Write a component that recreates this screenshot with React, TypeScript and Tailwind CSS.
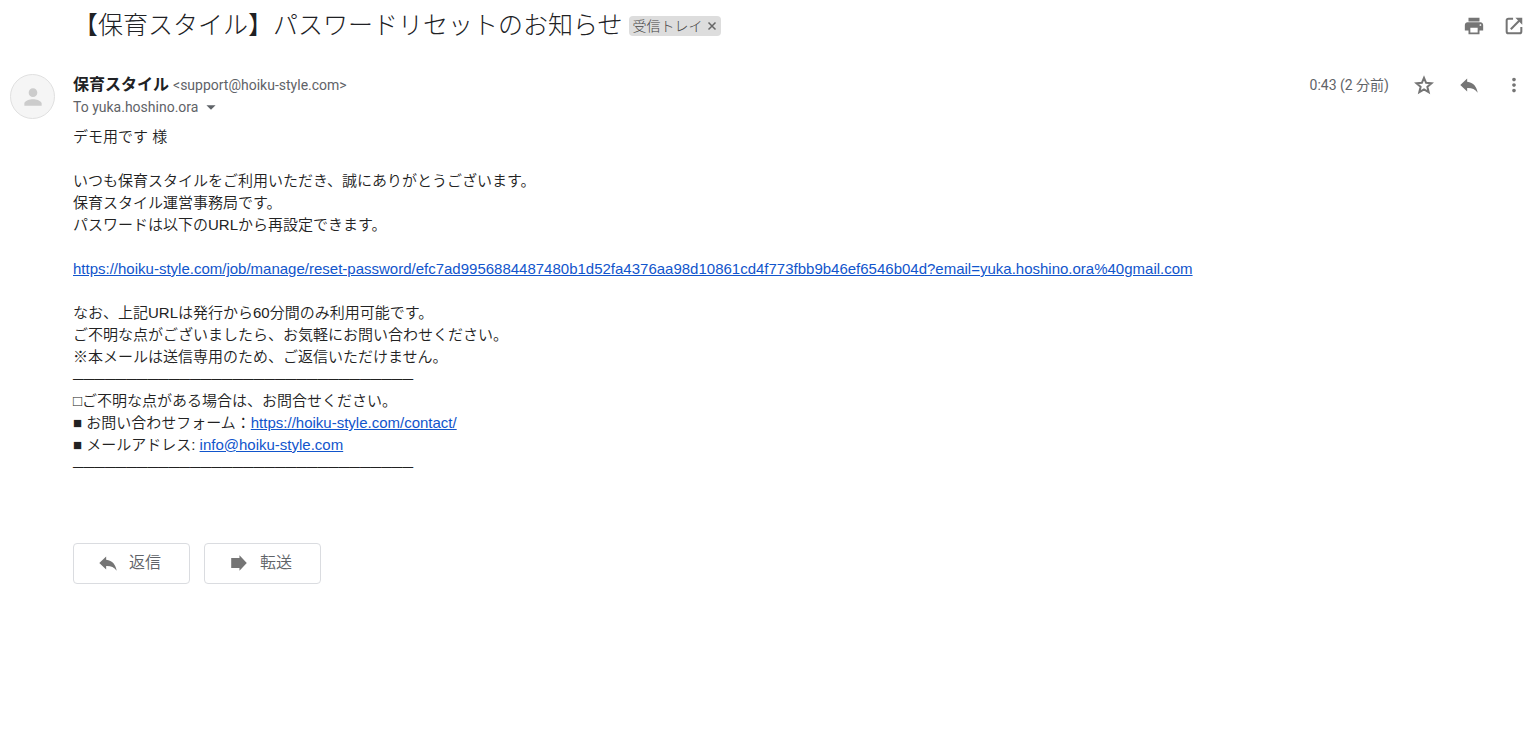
import type { ReactNode } from 'react';
import { MdArrowDropDown, MdMoreVert, MdPerson, MdPrint } from 'react-icons/md';

const RULE = '─'.repeat(32);
const RESET_URL =
  'https://hoiku-style.com/job/manage/reset-password/efc7ad9956884487480b1d52fa4376aa98d10861cd4f773fbb9b46ef6546b04d?email=yuka.hoshino.ora%40gmail.com';

function OpenInNewIcon() {
  return (
    <svg viewBox="0 0 24 24" className="size-[22px]" fill="none" stroke="currentColor" strokeWidth="2.2">
      <path d="M11 4H6a2 2 0 0 0-2 2v12a2 2 0 0 0 2 2h12a2 2 0 0 0 2-2v-5" />
      <path d="M8.5 15.5 19 5" />
      <path d="M13.500 3H21v7.500z" fill="currentColor" stroke="none" />
    </svg>
  );
}

function StarIcon() {
  return (
    <svg viewBox="0 0 24 24" className="size-[22px]" fill="none" stroke="currentColor" strokeWidth="2.2">
      <path d="M12 4.200l2.300 5.400 5.900.5-4.500 3.900 1.400 5.800L12 16.700l-5.100 3.100 1.400-5.800-4.500-3.900 5.900-.5z" />
    </svg>
  );
}

function ReplyIcon() {
  return (
    <svg viewBox="0 0 24 24" className="size-[22px]" fill="currentColor">
      <path d="M10 8.500V5l-7.500 7 7.500 7v-3.700c5-.2 8.500 1.200 11.500 5.200-1-6-4.500-11.500-11.500-12z" />
    </svg>
  );
}

function ForwardIcon() {
  return (
    <svg viewBox="0 0 24 24" className="size-[22px]" fill="currentColor">
      <path d="M3.500 6.5h9V3.500L20.500 12l-8 8.500v-3h-9z" />
    </svg>
  );
}

function IconButton({ label, children }: { label: string; children: ReactNode }) {
  return (
    <button aria-label={label} title={label} className="flex size-[22px] items-center justify-center text-[#757575]">
      {children}
    </button>
  );
}

function MailLink({ href, children }: { href: string; children: ReactNode }) {
  return (
    <a href={href} className="break-all text-[#1155cc] underline">
      {children}
    </a>
  );
}

function ActionButton({ icon, children }: { icon: ReactNode; children: ReactNode }) {
  return (
    <button className="flex h-[41px] w-[117px] items-center gap-2.5 rounded border border-[#dadce0] pb-px pl-[23px] text-base font-[350] text-[#5f6368]">
      <span className="text-[#757575]">{icon}</span>
      <span>{children}</span>
    </button>
  );
}

export default function App() {
  return (
    <main className="min-h-screen bg-white pr-2 font-['Roboto','Noto_Sans_CJK_JP',sans-serif] text-[#202124]">
      {/* Subject */}
      <header className="flex h-[52px] items-center pl-[73px]">
        <h1 className="text-[25px] leading-8 font-light">【保育スタイル】パスワードリセットのお知らせ</h1>
        <span className="ml-1.5 flex h-5 items-center rounded bg-[#dddddd] px-1 text-sm font-light text-[#444444]">
          受信トレイ
          <button aria-label="ラベルを削除" className="ml-1 flex items-center text-[#666666]">
            <svg viewBox="0 0 10 10" className="size-2.5" stroke="currentColor" strokeWidth="1.5">
              <path d="M1.500 1.500l7 7M8.500 1.500l-7 7" />
            </svg>
          </button>
        </span>
        <div className="ml-auto flex gap-[18px]">
          <IconButton label="印刷">
            <MdPrint size={22} />
          </IconButton>
          <IconButton label="新しいウィンドウで開く">
            <OpenInNewIcon />
          </IconButton>
        </div>
      </header>

      <article className="flex items-start pt-[22px] pl-2.5">
        <div className="flex size-[45px] shrink-0 items-center justify-center rounded-full border border-[#e0e0e0] bg-[#f5f5f5] text-[#cccccc]">
          <MdPerson size={26} />
        </div>

        <div className="ml-[18px] min-w-0 flex-1">
          {/* Sender */}
          <div className="flex h-[22px] items-center">
            <span className="text-base font-bold">保育スタイル</span>
            <span className="ml-1 text-sm text-[#5f6368]">&lt;support@hoiku-style.com&gt;</span>
            <time className="ml-auto text-sm text-[#5f6368]">0:43 (2 分前)</time>
            <div className="ml-6 flex gap-[23px]">
              <IconButton label="スター">
                <StarIcon />
              </IconButton>
              <IconButton label="返信">
                <ReplyIcon />
              </IconButton>
              <IconButton label="その他">
                <MdMoreVert size={22} />
              </IconButton>
            </div>
          </div>
          <button className="flex h-[22px] items-center gap-0.5 text-sm text-[#5f6368]">
            To yuka.hoshino.ora
            <MdArrowDropDown size={22} />
          </button>

          {/* Message */}
          <div className="mt-2 font-['Liberation_Sans','Noto_Sans_CJK_JP',sans-serif] text-[15px] leading-[22px] font-[350] text-[#222222]">
            <p>デモ用です 様</p>
            <p className="mt-[22px]">
              いつも保育スタイルをご利用いただき、誠にありがとうございます。
              <br />
              保育スタイル運営事務局です。
              <br />
              パスワードは以下のURLから再設定できます。
            </p>
            <p className="mt-[22px]">
              <MailLink href={RESET_URL}>{RESET_URL}</MailLink>
            </p>
            <p className="mt-[22px]">
              なお、上記URLは発行から60分間のみ利用可能です。
              <br />
              ご不明な点がございましたら、お気軽にお問い合わせください。
              <br />
              ※本メールは送信専用のため、ご返信いただけません。
              <br />
              {RULE}
              <br />
              □ご不明な点がある場合は、お問合せください。
              <br />■ お問い合わせフォーム：
              <MailLink href="https://hoiku-style.com/contact/">https://hoiku-style.com/contact/</MailLink>
              <br />■ メールアドレス:{' '}
              <MailLink href="mailto:info@hoiku-style.com">info@hoiku-style.com</MailLink>
              <br />
              {RULE}
            </p>
          </div>

          <div className="mt-[65px] flex gap-3.5">
            <ActionButton icon={<ReplyIcon />}>返信</ActionButton>
            <ActionButton icon={<ForwardIcon />}>転送</ActionButton>
          </div>
        </div>
      </article>
    </main>
  );
}
